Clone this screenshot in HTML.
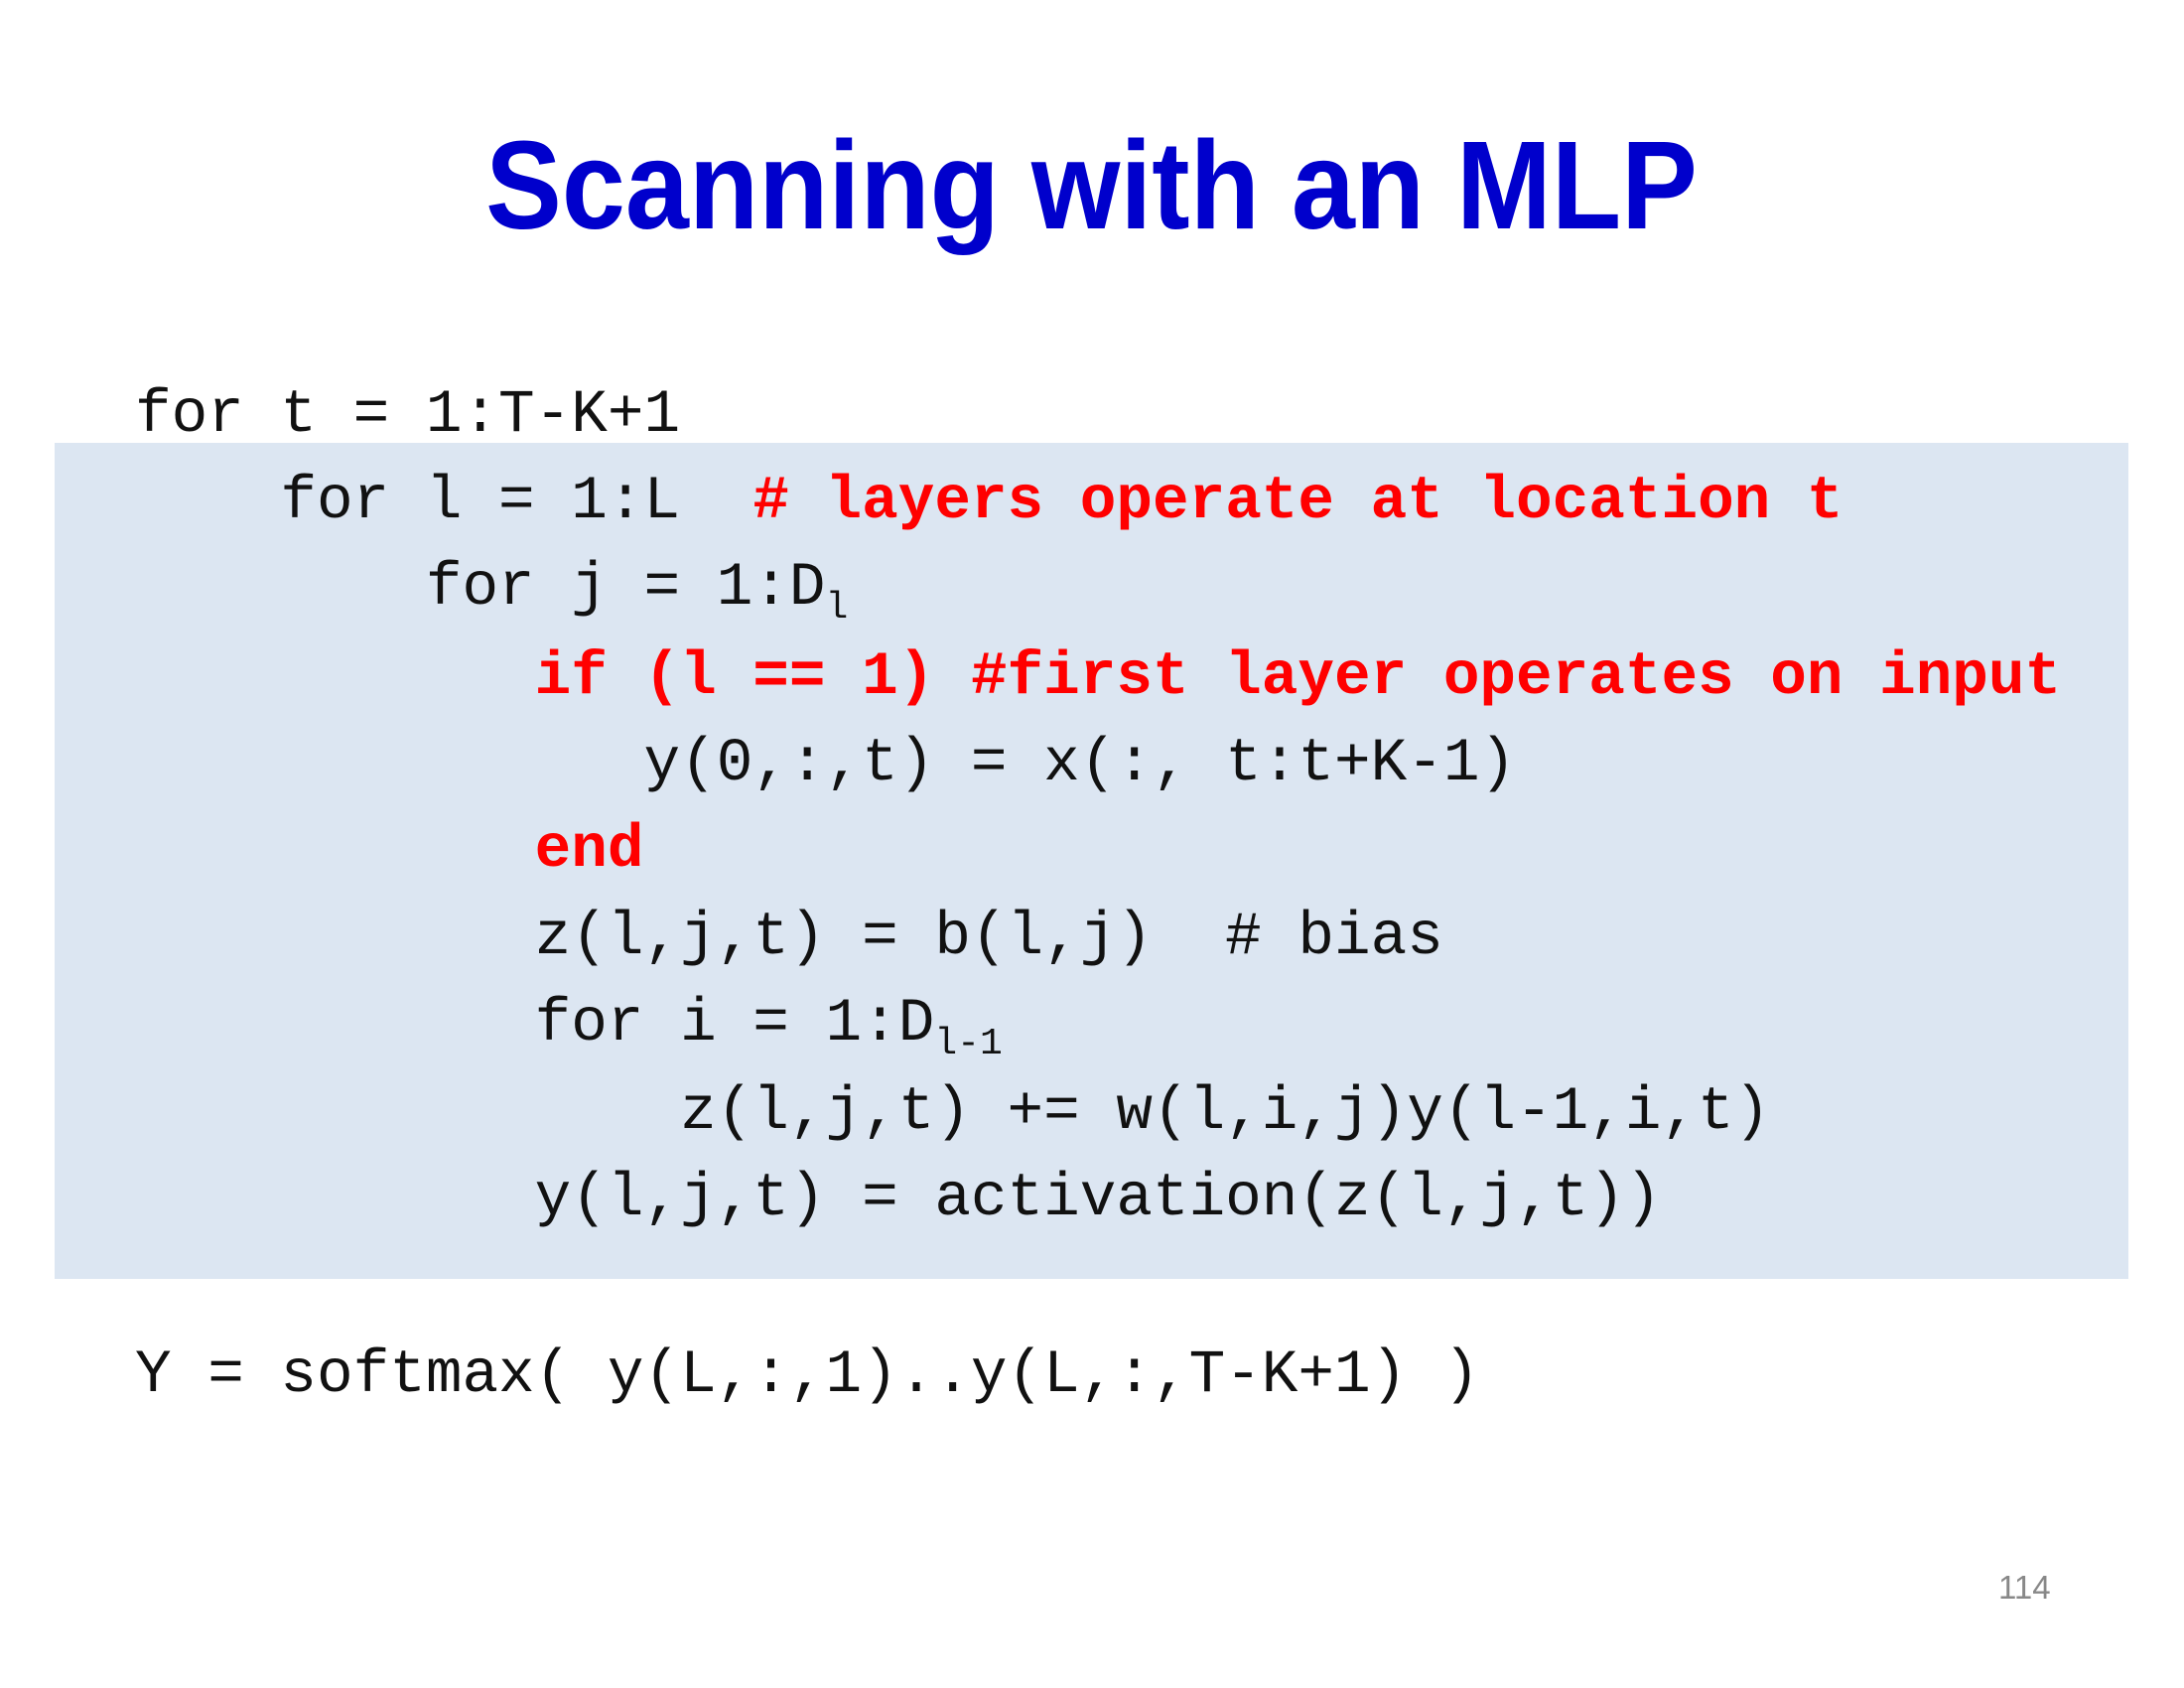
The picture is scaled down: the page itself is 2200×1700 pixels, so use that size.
<!DOCTYPE html>
<html><head><meta charset="utf-8"><style>
html,body{margin:0;padding:0;background:#fff;width:2200px;height:1700px;overflow:hidden;position:relative}
.title{position:absolute;left:0;width:2200px;top:107px;text-align:center;font-family:"Liberation Sans",sans-serif;font-weight:bold;font-size:126px;line-height:160px;color:#0000cc}
.title span{display:inline-block;transform:scaleX(0.913);transform-origin:center}
.box{position:absolute;left:55px;top:446px;width:2089px;height:842px;background:#dce6f2}
.l{position:absolute;left:136px;font-family:"Liberation Mono",monospace;font-size:61px;line-height:61px;white-space:pre;color:#111}
.r{color:#ff0000;font-weight:bold}
sub{font-size:38px;vertical-align:-14px;line-height:0}
.pn{position:absolute;left:2013px;top:1580px;font-family:"Liberation Sans",sans-serif;font-size:33px;color:#888}
</style></head><body>
<div class="title"><span>Scanning with an MLP</span></div>
<div class="box"></div>
<div class="l" style="top:388px">for t = 1:T-K+1</div>
<div class="l" style="top:475px">    for l = 1:L  <span class="r"># layers operate at location t</span></div>
<div class="l" style="top:562px">        for j = 1:D<sub>l</sub></div>
<div class="l" style="top:652px">           <span class="r">if (l == 1) #first layer operates on input</span></div>
<div class="l" style="top:739px">              y(0,:,t) = x(:, t:t+K-1)</div>
<div class="l" style="top:826px">           <span class="r">end</span></div>
<div class="l" style="top:914px">           z(l,j,t) = b(l,j)  # bias</div>
<div class="l" style="top:1001px">           for i = 1:D<sub>l-1</sub></div>
<div class="l" style="top:1090px">               z(l,j,t) += w(l,i,j)y(l-1,i,t)</div>
<div class="l" style="top:1177px">           y(l,j,t) = activation(z(l,j,t))</div>
<div class="l" style="top:1355px">Y = softmax( y(L,:,1)..y(L,:,T-K+1) )</div>
<div class="pn">114</div>
</body></html>
